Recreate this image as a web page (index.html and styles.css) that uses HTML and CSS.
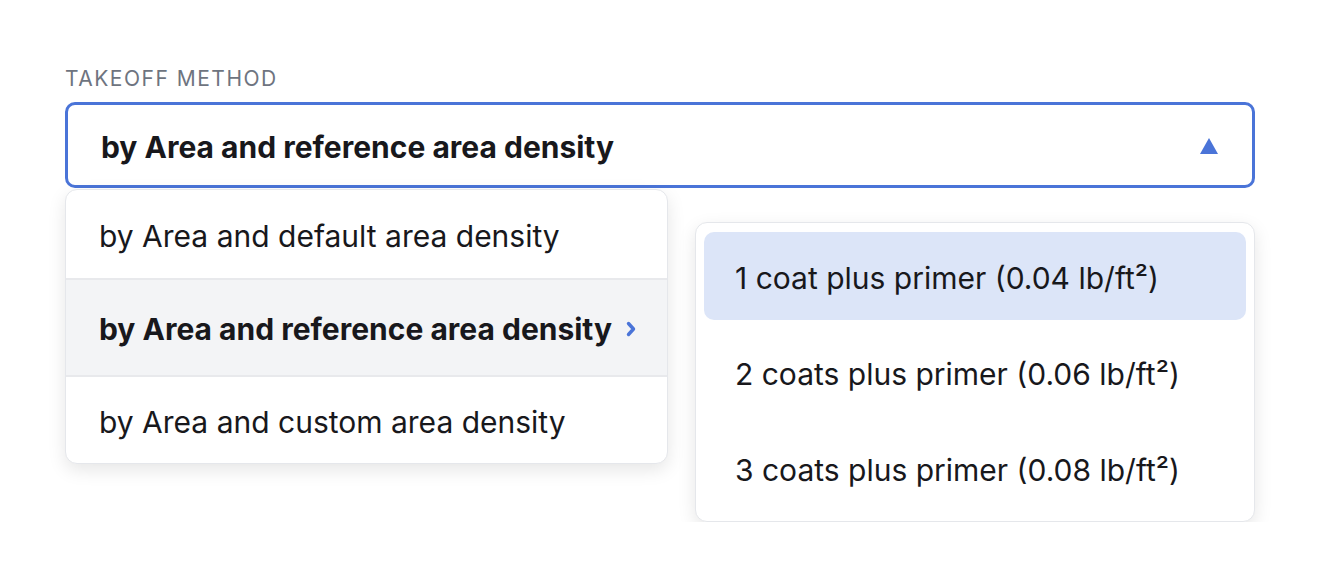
FILE: index.html
```html
<!DOCTYPE html>
<html>
<head>
<meta charset="utf-8">
<link rel="stylesheet" href="styles.css">
</head>
<body>
<div class="page">
  <div class="label">TAKEOFF METHOD</div>
  <div class="select">
    <span class="select-value">by Area and reference area density</span>
    <svg class="caret" width="18" height="16" viewBox="0 0 18 16"><polygon points="9,0 18,16 0,16" fill="#4a74d8"/></svg>
  </div>
  <div class="menus">
    <div class="menu">
      <div class="item">by Area and default area density</div>
      <div class="item active">by Area and reference area density
        <svg class="chev" width="10" height="16" viewBox="0 0 10 16"><path d="M2.5 2.5 L7.5 8 L2.5 13.5" fill="none" stroke="#4a74d8" stroke-width="3.4" stroke-linecap="round" stroke-linejoin="round"/></svg>
      </div>
      <div class="item">by Area and custom area density</div>
    </div>
    <div class="submenu">
      <div class="subitem selected">1 coat plus primer (0.04 lb/ft²)</div>
      <div class="subitem">2 coats plus primer (0.06 lb/ft²)</div>
      <div class="subitem">3 coats plus primer (0.08 lb/ft²)</div>
    </div>
  </div>
</div>
</body>
</html>
```
FILE: styles.css
```css
html, body {
  margin: 0;
  padding: 0;
  background: #ffffff;
}
body {
  font-family: "Inter", "Noto Sans", sans-serif;
  color: #18181c;
}
.page {
  padding: 66px 0 0 65px;
  width: 1190px;
}
.label {
  font-size: 21px;
  line-height: 26px;
  letter-spacing: 1.5px;
  color: #6e7480;
  margin-bottom: 10px;
}
.select {
  box-sizing: border-box;
  height: 86px;
  border: 3px solid #4a74d8;
  border-radius: 10px;
  display: flex;
  align-items: center;
  justify-content: space-between;
  padding: 4px 34px 0 33px;
}
.select-value {
  font-size: 30px;
  font-weight: 700;
}
.caret {
  display: block;
  margin-top: -2px;
}
.menus {
  display: flex;
  align-items: flex-start;
  gap: 27px;
  margin-top: 1px;
}
.menu {
  width: 603px;
  box-sizing: border-box;
  border: 1px solid #e5e7eb;
  border-radius: 12px;
  background: #fff;
  box-shadow: 0 6px 18px rgba(0,0,0,0.10);
  overflow: hidden;
}
.item {
  box-sizing: border-box;
  height: 88px;
  display: flex;
  align-items: center;
  padding: 3px 0 0 33px;
  font-size: 30px;
  border-top: 2px solid #e8e9ec;
}
.item:first-child {
  border-top: none;
}
.item.active {
  background: #f3f4f6;
  font-weight: 700;
  height: 97px;
}
.chev {
  margin-left: 14px;
  display: block;
}
.submenu {
  margin-top: 33px;
  width: 560px;
  box-sizing: border-box;
  border: 1px solid #e5e7eb;
  border-radius: 12px;
  background: #fff;
  box-shadow: 0 6px 18px rgba(0,0,0,0.10);
  padding: 9px 8px;
  display: flex;
  flex-direction: column;
  gap: 8px;
}
.subitem {
  box-sizing: border-box;
  height: 88px;
  display: flex;
  align-items: center;
  padding: 3px 0 0 31px;
  font-size: 30px;
  border-radius: 10px;
}
.subitem.selected {
  background: #dce5f8;
}
```
